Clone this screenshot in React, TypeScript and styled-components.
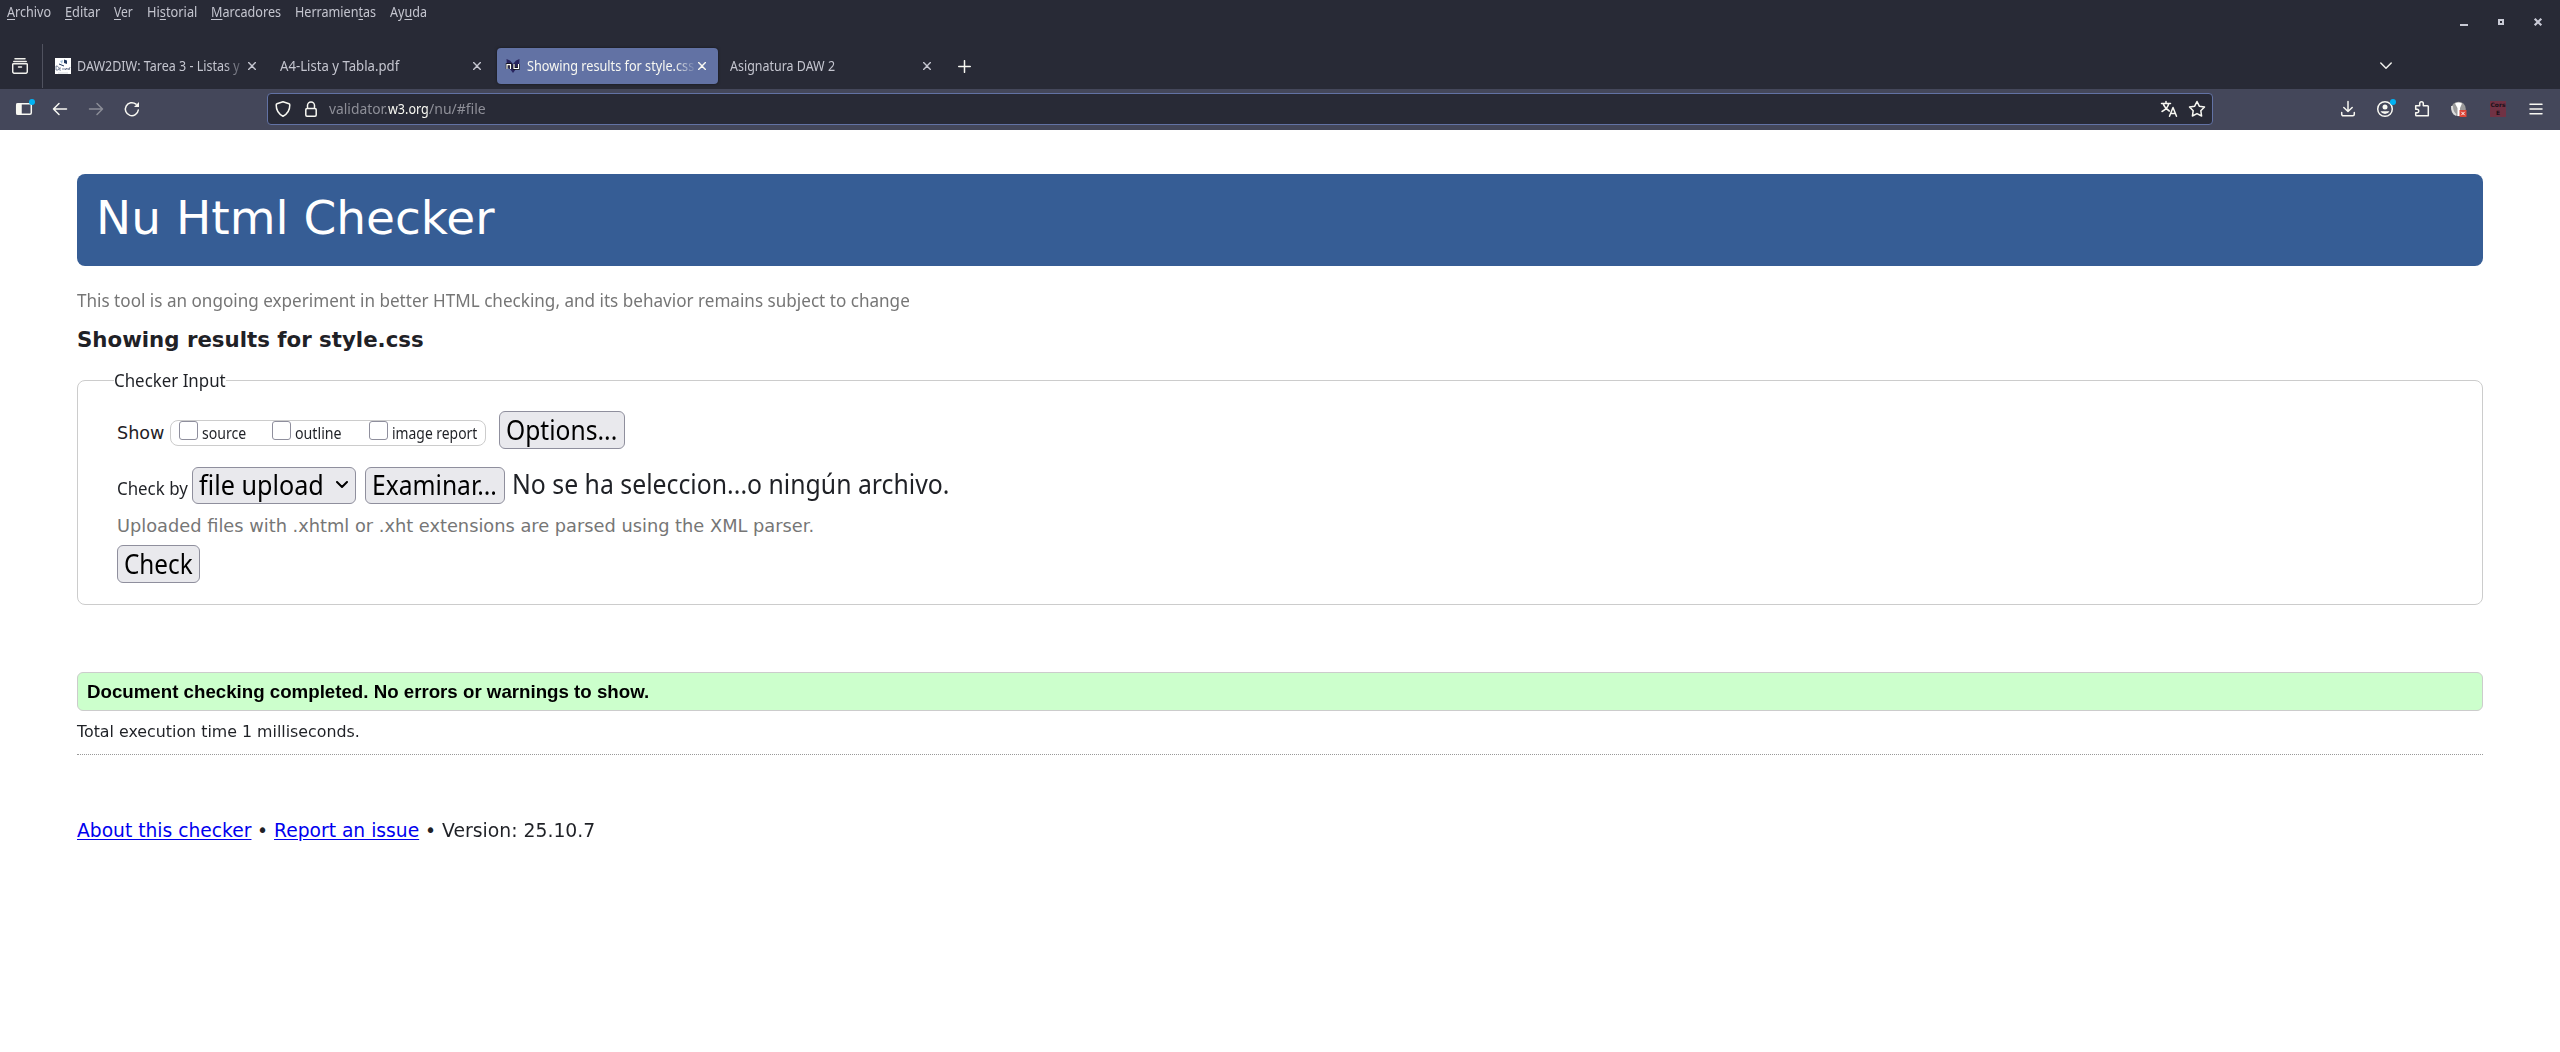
import React, { useLayoutEffect, useRef, useState } from "react";
import styled, { createGlobalStyle } from "styled-components";

const ui = `"Noto Sans", "Open Sans", sans-serif`;
const dejavu = `"DejaVu Sans", sans-serif`;

const Global = createGlobalStyle`
  body { margin: 0; background: #fff; }
  * { box-sizing: border-box; }
`;

/* Condensed text: scales its glyphs horizontally to a given advance width. */
const FitBox = styled.span<{ $w: number }>`
  display: inline-block;
  width: ${(p) => p.$w}px;
  white-space: nowrap;
  flex: none;
`;
const FitInner = styled.span`
  display: inline-block;
  transform-origin: 0 50%;
`;
function Fit({ w, children }: { w: number; children: React.ReactNode }) {
  const ref = useRef<HTMLSpanElement>(null);
  const [scale, setScale] = useState(1);
  useLayoutEffect(() => {
    if (ref.current) setScale(w / ref.current.offsetWidth);
  }, [w]);
  return (
    <FitBox $w={w}>
      <FitInner ref={ref} style={{ transform: `scaleX(${scale})` }}>{children}</FitInner>
    </FitBox>
  );
}

const Chrome = styled.header`
  background: #282a36;
  color: #c4c5cf;
  font: 14.6px/20px ${ui};
  height: 130px;
`;
const TitleRow = styled.div`
  display: flex;
  justify-content: space-between;
  height: 43px;
`;
const MenuBar = styled.nav`
  display: flex;
  gap: 14px;
  padding: 1px 0 0 7px;
  u { text-underline-offset: 2px; }
`;
const WindowButtons = styled.div`
  display: flex;
  gap: 27px;
  padding: 16px 17px 0 0;
  svg { display: block; }
`;
const TabStrip = styled.div`
  display: flex;
  height: 46px;
  padding: 0 168px 0 12px;
  align-items: center;
`;
const Divider = styled.div`
  width: 1px;
  height: 44px;
  margin: 0 4px 0 14px;
  background: #50525f;
`;
const Tab = styled.div<{ $active?: boolean }>`
  display: flex;
  align-items: center;
  width: 221px;
  height: 36px;
  margin-right: 4px;
  padding: 0 12px 0 8px;
  border-radius: 4px;
  background: ${(p) => (p.$active ? "#6272a4" : "transparent")};
  color: ${(p) => (p.$active ? "#f8f8f2" : "#c4c5cf")};
  box-shadow: ${(p) => (p.$active ? "0 0 3px rgba(0,0,0,.5)" : "none")};
`;
const TabLabel = styled.div<{ $fade?: boolean }>`
  flex: 1;
  overflow: hidden;
  margin-left: ${(p) => (p.$fade ? "6px" : "0")};
  margin-right: 3px;
  height: 22px;
  mask-image: ${(p) => (p.$fade ? "linear-gradient(to right, #000 88%, transparent 101%)" : "none")};
`;
const Spacer = styled.div`
  flex: 1;
`;
const Gap = styled.div`
  flex: 0 0 9px;
`;
const Plus = styled.div`
  margin-left: 11px;
  height: 13px;
  svg { display: block; }
`;
const Toolbar = styled.div`
  display: flex;
  align-items: center;
  height: 41px;
  padding: 0 14px 1px 14px;
  background: #44475a;
  color: #f8f8f2;
  svg { display: block; flex: none; overflow: visible; }
`;
const NavButtons = styled.div`
  display: flex;
  gap: 16px;
  width: 253px;
`;
const UrlBar = styled.div`
  display: flex;
  align-items: center;
  width: 1946px;
  height: 32px;
  padding: 0 5px 0 7px;
  border: 1px solid #6272a4;
  border-radius: 4px;
  background: #282a36;
  font-size: 15px;
`;
const Host = styled.span`
  color: #f8f8f2;
`;
const UrlText = styled.div`
  display: flex;
  flex: 1;
  margin: -2px 0 0 12px;
  color: #8e8f98;
`;
const UrlIcons = styled.div`
  display: flex;
  gap: 8px;
`;
const LockIcon = styled.svg`
  margin-left: 14px;
`;
const Extensions = styled.div`
  display: flex;
  gap: 17px;
  margin-left: auto;
`;
const CorsBadge = styled.div`
  width: 16px;
  height: 16px;
  margin: 2px 3px 2px 4px;
  background: #713244;
  color: #1b1119;
  font: bold 6px/7.5px ${dejavu};
  text-align: center;
`;

const Page = styled.main`
  padding: 44px 77px 0;
  color: #1f2126;
  font-family: ${ui};
`;
const Banner = styled.h1`
  height: 92px;
  margin: 0;
  padding: 0 0 0 19px;
  border-radius: 8px;
  background: #365d95;
  color: #fff;
  font: 400 47px/87px ${dejavu};
`;
const Tagline = styled.p`
  height: 24px;
  margin: 22px 0 0;
  color: #767676;
  font-size: 18.4px;
  line-height: 24px;
`;
const ResultsTitle = styled.h2`
  height: 26px;
  margin: 15px 0 0;
  font: bold 21.3px/26px ${dejavu};
`;
const InputBox = styled.fieldset`
  height: 237px;
  margin: 15px 0 0;
  padding: 19px 0 0 39px;
  border: 1px solid #ccc;
  border-radius: 8px;
  min-width: 0;
`;
const Legend = styled.legend`
  height: 24px;
  margin-left: -3px;
  padding: 0;
  font-size: 18.4px;
  line-height: 23px;
`;
const Row = styled.div<{ $h: number; $mt?: number }>`
  display: flex;
  height: ${(p) => p.$h}px;
  margin-top: ${(p) => p.$mt ?? 0}px;
`;
const RowLabel = styled.span<{ $font: string; $size: number; $top: number; $gap: number }>`
  margin: ${(p) => p.$top}px ${(p) => p.$gap}px 0 0;
  font: ${(p) => p.$size}px/24px ${(p) => p.$font};
`;
const ShowGroup = styled.div`
  display: flex;
  width: 316px;
  height: 26px;
  margin: 9px 13px 0 0;
  padding-left: 8px;
  border: 1px solid #ccc;
  border-radius: 8px;
`;
const Option = styled.label<{ $w: number }>`
  display: flex;
  width: ${(p) => p.$w}px;
  font-size: 16px;
  line-height: 25px;
`;
const CheckMark = styled.span`
  flex: none;
  width: 19px;
  height: 19px;
  margin-right: 4px;
  border: 1px solid #8f8f9d;
  border-radius: 3px;
  background: #fff;
`;
const Button = styled.button<{ $w: number; $h: number }>`
  display: flex;
  align-items: center;
  flex: none;
  width: ${(p) => p.$w}px;
  height: ${(p) => p.$h}px;
  margin: 0;
  padding: 0 7px 1px 6px;
  border: 1px solid #8f8f9d;
  border-radius: 6px;
  background: #e9e9ed;
  color: #000;
  font: 26.4px/34px ${ui};
  svg { display: block; margin-left: auto; }
`;
const FileName = styled.span`
  margin-left: 7px;
  font-size: 26.4px;
  line-height: 35px;
`;
const Hint = styled.p`
  height: 24px;
  margin: 10px 0 7px;
  color: #767676;
  font: 17.8px/24px ${dejavu};
`;
const Success = styled.p`
  height: 39px;
  margin: 67px 0 0;
  padding-left: 9px;
  border: 1px solid #ccc;
  border-radius: 6px;
  background: #cfc;
  color: #000;
  font: bold 18.4px/37px "Liberation Sans", Arial, sans-serif;
`;
const Timing = styled.p`
  height: 44px;
  margin: 0;
  padding-top: 11px;
  border-bottom: 1px dotted #999;
  font: 16px/20px ${dejavu};
`;
const Footer = styled.footer`
  display: flex;
  gap: 6px;
  margin-top: 62px;
  font: 18.7px/27px ${dejavu};
  a { color: #0000ee; }
  a span { text-decoration: inherit; text-underline-offset: 2px; }
`;

const s = { fill: "none", stroke: "currentColor", strokeWidth: 1.5, strokeLinecap: "round", strokeLinejoin: "round" } as const;
const Close = () => (
  <svg width="8" height="8" {...s} strokeWidth={1.4}><path d="M.6.6l6.8 6.8M7.4.6L.6 7.4" /></svg>
);
const Icon = ({ children, size = 20 }: { children: React.ReactNode; size?: number }) => (
  <svg width={size} height={size} viewBox="0 0 20 20" {...s}>{children}</svg>
);

export default function App() {
  return (
    <>
      <Global />
      <Chrome>
        <TitleRow>
          <MenuBar>
            <Fit w={44}><u>A</u>rchivo</Fit>
            <Fit w={35}><u>E</u>ditar</Fit>
            <Fit w={19}><u>V</u>er</Fit>
            <Fit w={50}>Hi<u>s</u>torial</Fit>
            <Fit w={70}><u>M</u>arcadores</Fit>
            <Fit w={81}>Herramien<u>t</u>as</Fit>
            <Fit w={37}>Ay<u>u</u>da</Fit>
          </MenuBar>
          <WindowButtons>
            <svg width="10" height="12"><path d="M1 8h8v2H1z" fill="#c9cad6" /></svg>
            <svg width="10" height="12"><path d="M3 4h4v4H3z" fill="none" stroke="#c9cad6" strokeWidth="2" /></svg>
            <svg width="10" height="12"><path d="M1.700 2.700l6.600 6.600M8.300 2.700L1.700 9.300" stroke="#c9cad6" strokeWidth="2.200" /></svg>
          </WindowButtons>
        </TitleRow>
        <TabStrip>
          <svg width="16" height="16" {...s} color="#f0f0ec"><path d="M3 .8h10M1.800 3.400h12.400M1.500 5.800h13a.8.8 0 0 1 .8.8v6.900a1.800 1.800 0 0 1-1.800 1.800h-11a1.800 1.800 0 0 1-1.800-1.800V6.600a.8.8 0 0 1 .8-.8zM6.500 9h3" /></svg>
          <Divider />
          <Tab>
            <svg width="16" height="16"><path d="M0 0h16v16H0z" fill="#fff" /><path d="M5 3l3-1-1 4z" fill="#a9c4dc" /><path d="M9 1.500l3 1V6L9 5z" fill="#20385e" /><path d="M4 6l5 2" stroke="#20385e" /><path d="M1 8v4h2c2-1 1-4-2-4m5 2c-3 0-2 3 0 2m2-2v2m2-2v2l2-2v2m1-2l1 2 1-3" fill="none" stroke="#5b6784" strokeWidth=".8" /><path d="M3 15h10" stroke="#b6bcc8" strokeWidth=".6" /></svg>
            <TabLabel $fade><Fit w={163}>DAW2DIW: Tarea 3 - Listas y</Fit></TabLabel>
            <Close />
          </Tab>
          <Tab>
            <TabLabel><Fit w={119}>A4-Lista y Tabla.pdf</Fit></TabLabel>
            <Close />
          </Tab>
          <Tab $active>
            <svg width="16" height="16" viewBox="0 0 16 16"><path d="M1.500 1l3.500 1.500L8 6l3-3.500L14.500 1 14 9l-3 2-3 4-3-4-3-2z" fill="#29255e" /><path d="M2 11V6.500h3.500V11M9 6v4.500h4.500V6" fill="none" stroke="#111" strokeWidth="2.400" /><path d="M2 11V6.700h3.500V11M9 6v4.500h4.500V6" fill="none" stroke="#fff" strokeWidth="1.200" /></svg>
            <TabLabel $fade><Fit w={171}>Showing results for style.css:</Fit></TabLabel>
            <Close />
          </Tab>
          <Tab>
            <TabLabel><Fit w={105}>Asignatura DAW 2</Fit></TabLabel>
            <Close />
          </Tab>
          <Plus><svg width="13" height="13" {...s} color="#f8f8f2"><path d="M6.500.7v11.600M.7 6.500h11.600" /></svg></Plus>
          <Spacer />
          <svg width="12" height="8" {...s} color="#f0f0ec"><path d="M.8 1L6 6.200 11.200 1" /></svg>
        </TabStrip>
        <Toolbar>
          <NavButtons>
            <Icon><rect x="2.700" y="4.700" width="14.600" height="10.600" rx="1.500" /><path d="M3 5h4v10H3z" fill="currentColor" /><circle cx="18" cy="3" r="3" fill="#00b3f4" stroke="none" /></Icon>
            <Icon><path d="M16.500 10h-13M9 4.500L3.500 10 9 15.500" /></Icon>
            <Icon><path opacity=".4" d="M3.500 10h13M11 4.500l5.500 5.500-5.500 5.500" /></Icon>
            <Icon><path d="M16.300 11A6.500 6.500 0 1 1 14 5.200" /><path d="M17 3v5h-5z" fill="currentColor" stroke="none" /></Icon>
          </NavButtons>
          <UrlBar>
            <Icon size={16}><path strokeWidth="1.900" d="M10 1l7.500 2.500a1.500 1.500 0 0 1 1 1.500c0 6-2.500 11-8.500 14C4 16 1.500 11 1.500 5a1.500 1.500 0 0 1 1-1.500z" /></Icon>
            <LockIcon width="12" height="16" {...s}><path d="M2.500 7.500v-3a3.500 3.500 0 0 1 7 0v3M2 7.500h8a1.200 1.200 0 0 1 1.200 1.200V14a1.200 1.200 0 0 1-1.200 1.200H2A1.200 1.200 0 0 1 .8 14V8.700A1.200 1.200 0 0 1 2 7.500z" /></LockIcon>
            <UrlText><Fit w={59}>validator.</Fit><Host><Fit w={41}>w3.org</Fit></Host><Fit w={57}>/nu/#file</Fit></UrlText>
            <UrlIcons>
              <Icon><path d="M2.500 4.500h9M7 2.500v2M9.800 4.500C9 8 6 11 3 12.500M4.300 5c1 3 3.500 5.500 6 7M10.500 17.200l3.500-8.700 3.500 8.700M11.700 14.500h4.600" /></Icon>
              <Icon><path d="M10 2.500l2.300 4.700 5.200.8-3.700 3.700.8 5.300-4.600-2.400L5.400 17l.8-5.300L2.500 8l5.200-.8z" /></Icon>
            </UrlIcons>
          </UrlBar>
          <Extensions>
            <Icon><path d="M10 2.500v10M5.800 8.500l4.200 4 4.200-4M3.700 13.500v1.800a1.500 1.500 0 0 0 1.500 1.500h9.600a1.500 1.500 0 0 0 1.500-1.500v-1.800" /></Icon>
            <Icon><circle cx="10" cy="10" r="7.300" /><circle cx="10" cy="8" r="2.500" fill="currentColor" stroke="none" /><path d="M5.500 12.200h9a5 5 0 0 1-9 0z" fill="currentColor" stroke="none" /><circle cx="18" cy="3" r="3" fill="#00b3f4" stroke="none" /></Icon>
            <Icon><path d="M3.700 10.200V6.700h4V4.500a1.800 1.800 0 0 1 3.600 0v2.200h4.200a.8.8 0 0 1 .8.8v9.200H4.500a.8.8 0 0 1-.8-.8v-2.200H5a1.750 1.750 0 0 0 0-3.500z" /></Icon>
            <svg width="20" height="20"><circle cx="9.500" cy="10" r="7.300" fill="#9b9b9b" /><path d="M6 4.500c2-1.500 5-1.500 7 0L11 9v8H8.500V9z" fill="#fff" /><path d="M3 7c0 4 1 7 4 9" stroke="#ddd" strokeWidth="2" fill="none" /><rect x="10.500" y="11" width="7" height="7" fill="#dd4436" /><path d="M12.300 12.800l3.400 3.400m0-3.400l-3.400 3.400" stroke="#fff" /></svg>
            <CorsBadge>Cors<br />E</CorsBadge>
            <Icon><path d="M4 5.200h12M4 10h12M4 14.800h12" /></Icon>
          </Extensions>
        </Toolbar>
      </Chrome>
      <Page>
        <Banner><Fit w={399}>Nu Html Checker</Fit></Banner>
        <Tagline><Fit w={833}>This tool is an ongoing experiment in better HTML checking, and its behavior remains subject to change</Fit></Tagline>
        <ResultsTitle><Fit w={347}>Showing results for style.css</Fit></ResultsTitle>
        <InputBox>
          <Legend><Fit w={112}>Checker Input</Fit></Legend>
          <Row $h={38}>
            <RowLabel $font={dejavu} $size={17.6} $top={10} $gap={6}><Fit w={47}>Show</Fit></RowLabel>
            <ShowGroup>
              <Option $w={93}><CheckMark /><Fit w={44}>source</Fit></Option>
              <Option $w={97}><CheckMark /><Fit w={47}>outline</Fit></Option>
              <Option $w={108}><CheckMark /><Fit w={85}>image report</Fit></Option>
            </ShowGroup>
            <Button $w={126} $h={38}><Fit w={111}>Options...</Fit></Button>
          </Row>
          <Row $h={37} $mt={18}>
            <RowLabel $font={ui} $size={17.6} $top={9} $gap={4}><Fit w={71}>Check by</Fit></RowLabel>
            <Button $w={164} $h={37}><Fit w={125}>file upload</Fit><svg width="12" height="8" {...s} strokeWidth={2}><path d="M1 1l5 5 5-5" /></svg></Button>
            <Gap />
            <Button $w={140} $h={37}><Fit w={125}>Examinar...</Fit></Button>
            <FileName><Fit w={437}>No se ha seleccion...o ningún archivo.</Fit></FileName>
          </Row>
          <Hint><Fit w={697}>Uploaded files with .xhtml or .xht extensions are parsed using the XML parser.</Fit></Hint>
          <Button $w={83} $h={38}><Fit w={69}>Check</Fit></Button>
        </InputBox>
        <Success><Fit w={562}>Document checking completed. No errors or warnings to show.</Fit></Success>
        <Timing><Fit w={283}>Total execution time 1 milliseconds.</Fit></Timing>
        <Footer>
          <a href="#about"><Fit w={174}>About this checker</Fit></a>
          <span>•</span>
          <a href="#issue"><Fit w={145}>Report an issue</Fit></a>
          <span>•</span>
          <Fit w={153}>Version: 25.10.7</Fit>
        </Footer>
      </Page>
    </>
  );
}
